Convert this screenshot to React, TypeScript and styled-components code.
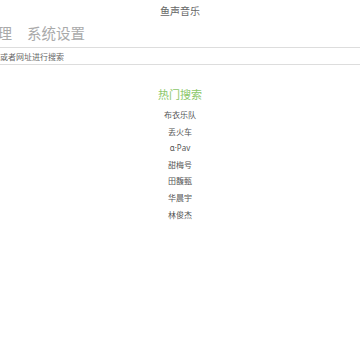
import styled, { createGlobalStyle } from 'styled-components';

const GlobalStyle = createGlobalStyle`
  html, body {
    margin: 0;
    padding: 0;
    background: #fff;
    font-family: "Noto Sans CJK SC", "Noto Sans", sans-serif;
    overflow: hidden;
  }
`;

const Page = styled.div`
  width: 360px;
  height: 360px;
  overflow: hidden;
`;

const Title = styled.h1`
  margin: 0;
  padding-top: 4px;
  height: 14px;
  text-align: center;
  font-size: 10px;
  line-height: 14px;
  font-weight: normal;
  color: #666;
`;

const Header = styled.div`
  margin-left: -60px;
  width: calc(100% + 60px);
`;

const Nav = styled.nav`
  display: flex;
  gap: 15px;
  padding-left: 14px;
  height: 29px;
  align-items: center;
`;

const NavItem = styled.a`
  font-size: 14.5px;
  color: #aaa;
  text-decoration: none;
`;

const Search = styled.input`
  display: block;
  box-sizing: border-box;
  width: 100%;
  height: 18px;
  margin: 0;
  padding: 0 4px;
  border: none;
  border-top: 1px solid #ddd;
  border-bottom: 1px solid #ddd;
  outline: none;
  font-family: inherit;
  font-size: 8px;
  color: #555;
  &::placeholder {
    color: #666;
  }
`;

const Hot = styled.section`
  display: flex;
  flex-direction: column;
  align-items: center;
  padding-top: 21px;
`;

const HotTitle = styled.h2`
  margin: 0 0 5px;
  font-size: 11px;
  line-height: 16px;
  font-weight: normal;
  color: #8cc86a;
`;

const HotItem = styled.div`
  height: 16.6px;
  font-family: "Noto Sans", "Noto Sans CJK SC", sans-serif;
  font-size: 8px;
  line-height: 16.6px;
  color: #555;
`;

const hot = ['布衣乐队', '丢火车', 'α·Pav', '甜梅号', '田馥甄', '华晨宇', '林俊杰'];

export default function App() {
  return (
    <Page>
      <GlobalStyle />
      <Title>鱼声音乐</Title>
      <Header>
        <Nav>
          <NavItem>音乐管理</NavItem>
          <NavItem>系统设置</NavItem>
        </Nav>
        <Search placeholder="输入歌名、歌手或者网址进行搜索" />
      </Header>
      <Hot>
        <HotTitle>热门搜索</HotTitle>
        {hot.map((v) => (
          <HotItem key={v}>{v}</HotItem>
        ))}
      </Hot>
    </Page>
  );
}
